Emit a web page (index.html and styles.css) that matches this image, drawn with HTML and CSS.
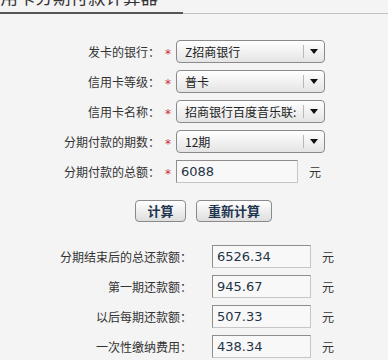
FILE: index.html
```html
<!DOCTYPE html>
<html lang="zh-CN">
<head>
<meta charset="utf-8">
<title>信用卡分期付款计算器</title>
<link rel="stylesheet" href="styles.css">
</head>
<body>
<div class="tabbar">
  <div class="tab"><span class="tab-text">信用卡分期付款计算器</span></div>
</div>
<div class="form">
  <div class="row">
    <span class="label">发卡的银行：</span><span class="star">*</span>
    <div class="select"><span class="sel-text">Z招商银行</span><span class="sel-btn"><i class="arrow"></i></span></div>
  </div>
  <div class="row">
    <span class="label">信用卡等级：</span><span class="star">*</span>
    <div class="select"><span class="sel-text">普卡</span><span class="sel-btn"><i class="arrow"></i></span></div>
  </div>
  <div class="row">
    <span class="label">信用卡名称：</span><span class="star">*</span>
    <div class="select"><span class="sel-text">招商银行百度音乐联:</span><span class="sel-btn"><i class="arrow"></i></span></div>
  </div>
  <div class="row">
    <span class="label">分期付款的期数：</span><span class="star">*</span>
    <div class="select"><span class="sel-text">12期</span><span class="sel-btn"><i class="arrow"></i></span></div>
  </div>
  <div class="row">
    <span class="label">分期付款的总额：</span><span class="star">*</span>
    <div class="input wide">6088</div><span class="unit">元</span>
  </div>
</div>
<div class="buttons">
  <button class="btn b1">计算</button>
  <button class="btn b2">重新计算</button>
</div>
<div class="results">
  <div class="rrow"><span class="rlabel">分期结束后的总还款额：</span><div class="input">6526.34</div><span class="unit">元</span></div>
  <div class="rrow"><span class="rlabel">第一期还款额：</span><div class="input">945.67</div><span class="unit">元</span></div>
  <div class="rrow"><span class="rlabel">以后每期还款额：</span><div class="input">507.33</div><span class="unit">元</span></div>
  <div class="rrow"><span class="rlabel">一次性缴纳费用：</span><div class="input">438.34</div><span class="unit">元</span></div>
</div>
</body>
</html>
```
FILE: styles.css
```css
html, body {
  margin: 0;
  padding: 0;
  background: #f4f4f4;
  overflow: hidden;
  height: 360px;
}
body {
  font-family: "Noto Sans CJK SC", "DejaVu Sans", sans-serif;
  font-size: 12px;
  color: #3a3a3a;
}
.tabbar {
  display: flex;
  border-bottom: 1px solid #c2c2c2;
}
.tab {
  width: 183px;
  height: 12px;
  border-bottom: 2px solid #555;
  margin-bottom: -1px;
  overflow: hidden;
}
.tab-text {
  display: block;
  font-size: 17.5px;
  line-height: 18px;
  margin-top: -12px;
  margin-left: -17px;
  white-space: nowrap;
  color: #333;
}
.form {
  margin-top: 26px;
}
.row {
  display: flex;
  align-items: center;
  height: 23px;
  margin-bottom: 7px;
}
.label {
  width: 160px;
  text-align: right;
  color: #333;
}
.star {
  width: 16px;
  text-align: center;
  color: #c8323c;
  font-family: "DejaVu Sans", sans-serif;
  font-size: 12px;
  line-height: 12px;
  padding-top: 5px;
  box-sizing: border-box;
}
.select {
  width: 149px;
  height: 23px;
  box-sizing: border-box;
  border: 1px solid #8a8a8a;
  border-radius: 4px;
  background: linear-gradient(#ffffff, #e4e4e4);
  display: flex;
  align-items: center;
}
.sel-text {
  flex: 1;
  padding-left: 8px;
  color: #222;
  font-size: 12px;
  white-space: nowrap;
  overflow: hidden;
}
.sel-btn {
  width: 20px;
  height: 13px;
  border-left: 1px solid #b8b8b8;
  display: flex;
  align-items: center;
  justify-content: center;
}
.arrow {
  width: 0;
  height: 0;
  border-left: 4px solid transparent;
  border-right: 4px solid transparent;
  border-top: 5px solid #111;
}
.input {
  width: 99px;
  height: 23px;
  box-sizing: border-box;
  border: 1px solid #c6c6c6;
  border-top-color: #8e8e8e;
  border-left-color: #8e8e8e;
  background: #f8f8f8;
  padding-left: 4px;
  font-family: "DejaVu Sans", sans-serif;
  font-size: 13px;
  line-height: 21px;
  color: #1f3447;
}
.input.wide {
  width: 122px;
}
.unit {
  margin-left: 11px;
  color: #333;
}
.buttons {
  display: flex;
  gap: 10px;
  padding-left: 135px;
  margin-top: 17px;
}
.btn {
  height: 22px;
  box-sizing: border-box;
  border: 1px solid #8a8a8a;
  border-radius: 4px;
  background: linear-gradient(#ffffff, #dedede);
  font-family: "Noto Sans CJK SC", sans-serif;
  font-weight: bold;
  font-size: 13px;
  color: #1e3550;
  padding: 0;
  line-height: 20px;
}
.b1 { width: 51px; }
.b2 { width: 76px; }
.results {
  margin-top: 23px;
}
.rrow {
  display: flex;
  align-items: center;
  height: 23px;
  margin-bottom: 7px;
}
.rlabel {
  width: 192px;
  margin-right: 20px;
  text-align: right;
  color: #333;
}
```
